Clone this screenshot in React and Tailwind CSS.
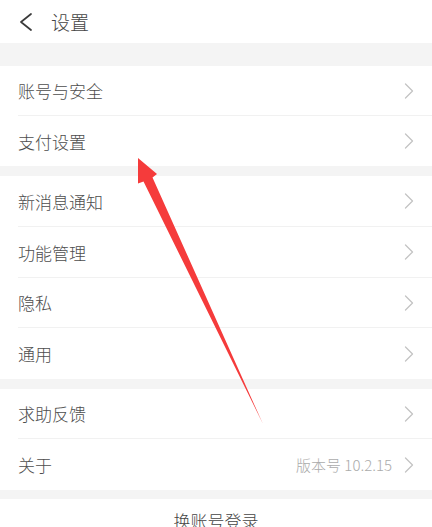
import React from "react";

const Chevron = () => (
  <svg width="10" height="16" viewBox="0 0 10 16" className="shrink-0">
    <path d="M1.5 1 L8.5 8 L1.5 15" fill="none" stroke="#c4c4c4" strokeWidth="1.3" strokeLinecap="round" strokeLinejoin="round" />
  </svg>
);

const Row = ({ label, h, last, extra }) => (
  <div className={`pl-[18px] bg-white ${h}`}>
    <div className={`flex items-center h-full pr-[18px] ${last ? "" : "border-b border-[#f1f1f1]"}`}>
      <span className="flex-1 text-[17px] text-[#4d4d4d] font-light leading-none">{label}</span>
      {extra && <span className="text-[15px] text-[#ababab] font-light mr-[12px] leading-none">{extra}</span>}
      <Chevron />
    </div>
  </div>
);

export default function App() {
  return (
    <div
      className="relative w-[432px] h-[527px] overflow-hidden bg-[#f4f4f4]"
      style={{ fontFamily: '"Noto Sans CJK SC", "Noto Sans", sans-serif' }}
    >
      <div className="h-[43px] bg-white flex items-center pl-[19px]">
        <svg width="14" height="18" viewBox="0 0 14 18">
          <path d="M12 1 L2 9 L12 17" fill="none" stroke="#3a3a3a" strokeWidth="1.7" strokeLinecap="round" strokeLinejoin="round" />
        </svg>
        <span className="ml-[18px] text-[19px] text-[#444] font-light leading-none">设置</span>
      </div>
      <div className="h-[23px]" />
      <div>
        <Row label="账号与安全" h="h-[50px]" />
        <Row label="支付设置" h="h-[50px]" last />
      </div>
      <div className="h-[10px]" />
      <div>
        <Row label="新消息通知" h="h-[51px]" />
        <Row label="功能管理" h="h-[51px]" />
        <Row label="隐私" h="h-[50px]" />
        <Row label="通用" h="h-[51px]" last />
      </div>
      <div className="h-[10px]" />
      <div>
        <Row label="求助反馈" h="h-[50px]" />
        <Row label="关于" h="h-[51px]" last extra="版本号 10.2.15" />
      </div>
      <div className="h-[9px]" />
      <div className="bg-white h-[40px] flex justify-center pt-[13px]">
        <span className="text-[17px] text-[#444] font-light leading-none">换账号登录</span>
      </div>
      <svg className="absolute left-0 top-0 pointer-events-none" width="432" height="527" viewBox="0 0 432 527">
        <polygon
          points="138,158 157,174 152.5,177.5 263,424 143.5,181.5 138,183.5"
          fill="#f53b3b"
        />
      </svg>
    </div>
  );
}
